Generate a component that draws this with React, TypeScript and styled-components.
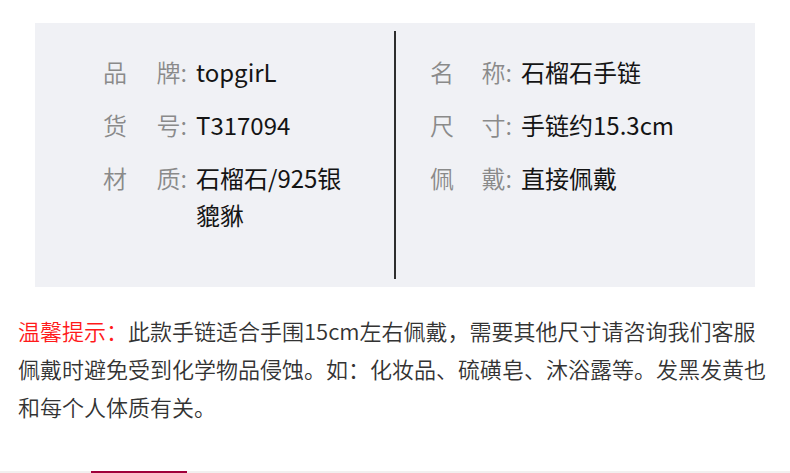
import React from 'react';
import styled, { createGlobalStyle } from 'styled-components';

const GlobalStyle = createGlobalStyle`
    html, body {
        margin: 0;
        padding: 0;
        background: #fff;
    }
    body {
        font-family: "Noto Sans CJK SC", "Noto Sans", sans-serif;
    }
`

type SpecType = {
    a: string
    b: string
    value: string
}

const leftSpecs: SpecType[] = [
    {a: '品', b: '牌', value: 'topgirL'},
    {a: '货', b: '号', value: 'T317094'},
    {a: '材', b: '质', value: '石榴石/925银貔貅'},
]

const rightSpecs: SpecType[] = [
    {a: '名', b: '称', value: '石榴石手链'},
    {a: '尺', b: '寸', value: '手链约15.3cm'},
    {a: '佩', b: '戴', value: '直接佩戴'},
]

const SpecRow = (props: SpecType & { labelWidth: number, valueWidth: number }) => {
    return (
        <Row>
            <Label width={props.labelWidth}>
                <span>{props.a}</span>
                <span>{props.b}:</span>
            </Label>
            <Value width={props.valueWidth}>{props.value}</Value>
        </Row>
    );
};

export default function App() {
    return (
        <Page>
            <GlobalStyle/>
            <Panel>
                <Column pad={68}>
                    {leftSpecs.map(s => <SpecRow key={s.a} {...s} labelWidth={84} valueWidth={152}/>)}
                </Column>
                <Divider/>
                <Column pad={34}>
                    {rightSpecs.map(s => <SpecRow key={s.a} {...s} labelWidth={82} valueWidth={220}/>)}
                </Column>
            </Panel>
            <Tip>
                <TipTitle>温馨提示：</TipTitle>此款手链适合手围15cm左右佩戴，需要其他尺寸请咨询我们客服<br/>
                佩戴时避免受到化学物品侵蚀。如：化妆品、硫磺皂、沐浴露等。发黑发黄也和每个人体质有关。
            </Tip>
            <TabBar>
                <ActiveTab/>
            </TabBar>
        </Page>
    );
}

const Page = styled.div`
    width: 790px;
    height: 473px;
    overflow: hidden;
    padding-top: 23px;
    box-sizing: border-box;
`

const Panel = styled.div`
    margin: 0 35px;
    height: 264px;
    background-color: #f0f1f5;
    display: grid;
    grid-template-columns: 359px 2px 1fr;
    align-items: stretch;
`

const Column = styled.div<{ pad: number }>`
    padding: 30px 0 0 ${p => p.pad}px;
    display: flex;
    flex-direction: column;
    gap: 16px;
`

const Divider = styled.div`
    background-color: #2e2e2e;
    margin: 8px 0;
`

const Row = styled.div`
    display: flex;
    align-items: flex-start;
    font-size: 24px;
    line-height: 37px;
`

const Label = styled.div<{ width: number }>`
    width: ${p => p.width}px;
    flex: none;
    display: flex;
    justify-content: space-between;
    color: #8a8a8a;
    font-weight: 350;
`

const Value = styled.div<{ width: number }>`
    margin-left: 9px;
    max-width: ${p => p.width}px;
    color: #141414;
    font-weight: 400;
    word-break: break-all;
`

const Tip = styled.p`
    margin: 24px 0 0;
    padding: 0 18px;
    font-size: 22px;
    line-height: 38px;
    font-weight: 350;
    color: #333;
`

const TipTitle = styled.span`
    color: #ff1a1a;
`

const TabBar = styled.div`
    margin-top: 46px;
    height: 2px;
    background-color: #f2efef;
    position: relative;
`

const ActiveTab = styled.div`
    position: absolute;
    left: 91px;
    top: 0;
    width: 96px;
    height: 2px;
    background-color: #a0003a;
`
